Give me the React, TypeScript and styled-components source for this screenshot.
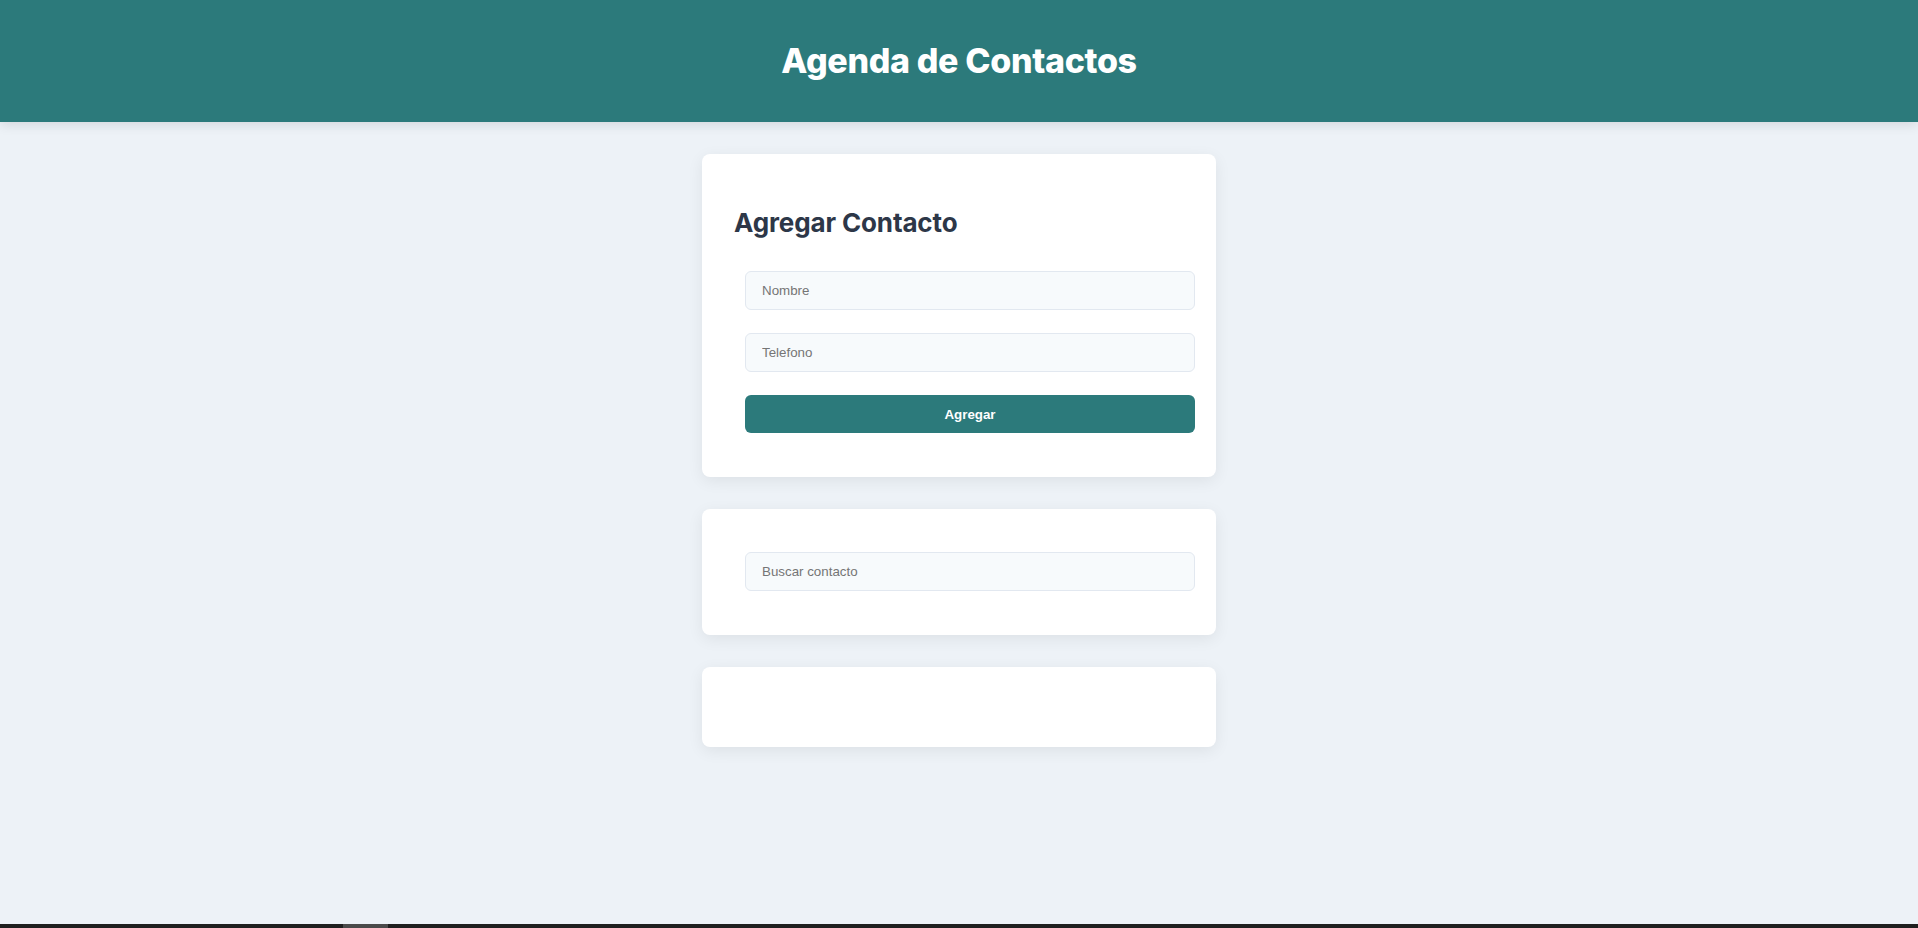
import * as React from 'react';
import styled, { createGlobalStyle } from 'styled-components';

const GlobalStyle = createGlobalStyle`
  * {
    box-sizing: border-box;
  }
  body {
    margin: 0;
    background-color: #edf2f7;
    font-family: 'Liberation Sans', Arial, sans-serif;
    min-height: 100vh;
  }
`;

const Header = styled.header`
  height: 122px;
  display: flex;
  align-items: center;
  justify-content: center;
  background-color: #2c7a7b;
  box-shadow: 0 2px 12px rgba(0, 0, 0, 0.12);
  position: relative;
  z-index: 1;
`;

const Title = styled.h1`
  margin: 0;
  color: #ffffff;
  font-family: Inter, 'Open Sans', sans-serif;
  font-weight: 800;
  font-size: 34px;
  letter-spacing: -0.01em;
  line-height: 1;
`;

const Main = styled.main`
  display: flex;
  flex-direction: column;
  align-items: center;
  gap: 32px;
  padding: 32px 0;
`;

const Card = styled.section`
  width: 514px;
  padding: 32px;
  background-color: #ffffff;
  border-radius: 8px;
  box-shadow: 0 4px 16px rgba(0, 0, 0, 0.07);
`;

const CardTitle = styled.h2`
  margin: 21px 0 21.5px;
  color: #2d3748;
  font-family: Inter, 'Open Sans', sans-serif;
  font-weight: 700;
  font-size: 26px;
  line-height: 1.2;
  letter-spacing: -0.005em;
`;

const Form = styled.form`
  display: flex;
  flex-direction: column;
`;

const Input = styled.input`
  width: 100%;
  height: 39px;
  margin: 11.5px 0 11.5px 11px;
  padding: 0 16px;
  border: 1px solid #e2e8f0;
  border-radius: 6px;
  background-color: #f7fafc;
  font-family: 'Liberation Sans', Arial, sans-serif;
  font-size: 13.333px;
  color: #2d3748;
  outline: none;

  &::placeholder {
    color: #757575;
  }
`;

const Button = styled.button`
  width: 100%;
  height: 38px;
  margin: 11.5px 0 11.5px 11px;
  border: none;
  border-radius: 6px;
  background-color: #2c7a7b;
  color: #ffffff;
  font-family: 'Liberation Sans', Arial, sans-serif;
  font-size: 13.333px;
  font-weight: 700;
  cursor: pointer;
`;

const ContactList = styled.ul`
  margin: 0;
  padding: 0;
  min-height: 16px;
  list-style: none;
`;

const ScrollBar = styled.div`
  position: fixed;
  left: 0;
  right: 0;
  bottom: 0;
  height: 4px;
  background-color: #1f1f1f;
`;

const ScrollThumb = styled.div`
  position: absolute;
  top: 0;
  left: 343px;
  width: 45px;
  height: 4px;
  background-color: #4a4a4a;
`;

export default function App() {
  const [contacts, setContacts] = React.useState<{ name: string; phone: string }[]>([]);
  const [name, setName] = React.useState('');
  const [phone, setPhone] = React.useState('');
  const [query, setQuery] = React.useState('');

  const handleSubmit = (e: React.FormEvent) => {
    e.preventDefault();
    if (!name.trim()) return;
    setContacts([...contacts, { name, phone }]);
    setName('');
    setPhone('');
  };

  const visible = contacts.filter((c) => c.name.toLowerCase().includes(query.toLowerCase()));

  return (
    <>
      <GlobalStyle />
      <Header>
        <Title>Agenda de Contactos</Title>
      </Header>
      <Main>
        <Card>
          <CardTitle>Agregar Contacto</CardTitle>
          <Form onSubmit={handleSubmit}>
            <Input placeholder="Nombre" value={name} onChange={(e) => setName(e.target.value)} />
            <Input placeholder="Telefono" value={phone} onChange={(e) => setPhone(e.target.value)} />
            <Button type="submit">Agregar</Button>
          </Form>
        </Card>
        <Card>
          <Form onSubmit={(e) => e.preventDefault()}>
            <Input placeholder="Buscar contacto" value={query} onChange={(e) => setQuery(e.target.value)} />
          </Form>
        </Card>
        <Card>
          <ContactList>
            {visible.map((c, i) => (
              <li key={i}>
                {c.name} - {c.phone}
              </li>
            ))}
          </ContactList>
        </Card>
      </Main>
      <ScrollBar>
        <ScrollThumb />
      </ScrollBar>
    </>
  );
}
